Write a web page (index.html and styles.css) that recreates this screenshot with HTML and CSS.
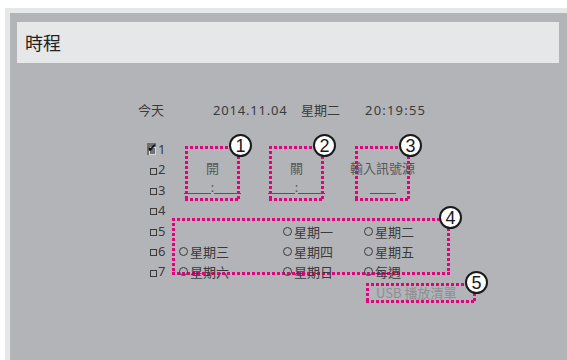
FILE: index.html
```html
<!DOCTYPE html>
<html lang="zh-Hant">

<head>
  <meta charset="UTF-8">
  <meta name="viewport" content="width=device-width, initial-scale=1.0">
  <title>時程</title>
  <link rel="stylesheet" href="styles.css">
</head>

<body>
  <div class="frame">
    <div class="panel">
      <div class="title-bar">時程</div>

      <div class="today">
        <span class="today-label">今天</span>
        <span class="date">2014.11.04</span>
        <span class="weekday">星期二</span>
        <span class="clock">20:19:55</span>
      </div>

      <div class="schedule">
        <ul class="slots">
          <li class="slot checked"><span class="check"><span class="tick">✔</span></span>1</li>
          <li class="slot"><span class="box"></span>2</li>
          <li class="slot"><span class="box"></span>3</li>
          <li class="slot"><span class="box"></span>4</li>
          <li class="slot"><span class="box"></span>5</li>
          <li class="slot"><span class="box"></span>6</li>
          <li class="slot"><span class="box"></span>7</li>
        </ul>

        <div class="fields">
          <div class="times">
            <div class="mark field">
              <span class="field-label">開</span>
              <span class="time"><span class="blank"></span>:<span class="blank"></span></span>
              <span class="badge">1</span>
            </div>
            <div class="mark field">
              <span class="field-label">關</span>
              <span class="time"><span class="blank"></span>:<span class="blank"></span></span>
              <span class="badge">2</span>
            </div>
            <div class="mark field">
              <span class="field-label">輸入訊號源</span>
              <span class="time"><span class="blank short"></span></span>
              <span class="badge">3</span>
            </div>
          </div>

          <div class="mark week">
            <span></span>
            <span class="radio">星期一</span>
            <span class="radio">星期二</span>
            <span class="radio">星期三</span>
            <span class="radio">星期四</span>
            <span class="radio">星期五</span>
            <span class="radio">星期六</span>
            <span class="radio">星期日</span>
            <span class="radio">每週</span>
            <span class="badge">4</span>
          </div>

          <div class="mark usb">
            USB 播放清單
            <span class="badge">5</span>
          </div>
        </div>
      </div>
    </div>
  </div>
</body>

</html>
```

FILE: styles.css
```css
body {
  margin: 0;
  padding: 0;
  background-color: #ffffff;
  font-family: 'Noto Sans', 'Noto Sans CJK TC', sans-serif;
  color: #3a3a3c;
  overflow: hidden;
}

.frame {
  margin: 8px 0 0 5px;
  padding: 5px 0 0 5px;
  height: 352px;
  box-sizing: border-box;
  background-color: #e6e7e8;
}

.panel {
  height: 347px;
  padding: 9px 8px 0 7px;
  box-sizing: border-box;
  background-color: #b3b4b7;
}

.title-bar {
  height: 41px;
  padding-left: 8px;
  background-color: #e6e7e9;
  color: #231f20;
  font-family: 'Noto Sans CJK TC', sans-serif;
  font-size: 18px;
  line-height: 41px;
}

.today {
  display: flex;
  margin-top: 37px;
  padding-left: 121px;
  font-size: 13px;
  line-height: 20px;
}

.today-label {
  width: 75px;
}

.date {
  width: 88px;
  letter-spacing: 0.8px;
}

.weekday {
  width: 64px;
}

.clock {
  letter-spacing: 1.2px;
}

.schedule {
  display: flex;
  margin-top: 19px;
  padding-left: 130px;
}

/* checkbox list on the left */
.slots {
  list-style: none;
  margin: 0;
  padding: 0;
  width: 25px;
  font-size: 13px;
}

.slot {
  height: 20.4px;
  line-height: 20.4px;
  display: flex;
  align-items: center;
}

.box {
  width: 5px;
  height: 5px;
  border: 1px solid #3a3a3c;
  margin: 3px 1px 0 3px;
}

.check {
  position: relative;
  width: 9px;
  height: 12px;
  margin-right: 2px;
  background-color: #707174;
}

.check::before {
  content: '';
  position: absolute;
  left: 2px;
  top: 4px;
  width: 5px;
  height: 6px;
  border: 1px solid #d8d9db;
}

.tick {
  position: absolute;
  left: 0;
  top: -5px;
  font-size: 12px;
  color: #111;
}

/* dotted magenta marks */
.mark {
  position: relative;
  box-sizing: border-box;
  padding: 3px;
  background:
    repeating-linear-gradient(90deg, #e5007e 0 3px, transparent 3px 5px) top left / 100% 3px no-repeat,
    repeating-linear-gradient(90deg, #e5007e 0 3px, transparent 3px 5px) bottom left / 100% 3px no-repeat,
    repeating-linear-gradient(180deg, #e5007e 0 3px, transparent 3px 5px) top left / 3px 100% no-repeat,
    repeating-linear-gradient(180deg, #e5007e 0 3px, transparent 3px 5px) top right / 3px 100% no-repeat;
}

.badge {
  position: absolute;
  top: -12px;
  right: -12px;
  width: 19px;
  height: 19px;
  border: 2px solid #1a1a1a;
  border-radius: 50%;
  background-color: #ffffff;
  color: #1a1a1a;
  font-family: 'Liberation Sans', Arial, sans-serif;
  font-size: 18px;
  line-height: 20px;
  text-align: center;
}

.fields {
  display: flex;
  flex-direction: column;
  align-items: flex-start;
}

.times {
  display: flex;
  gap: 29px;
  margin: 7px 0 0 13px;
}

.times .field + .field + .field {
  margin-left: 2px;
}

.field {
  width: 55px;
  height: 55px;
  display: flex;
  flex-direction: column;
  align-items: center;
  color: #555659;
  font-size: 13px;
}

.field-label {
  margin-top: 11px;
  line-height: 16px;
  white-space: nowrap;
  font-family: 'Noto Sans CJK TC', sans-serif;
}

.time {
  display: flex;
  align-items: flex-end;
  margin-top: 2px;
  height: 16px;
  line-height: 14px;
}

.blank {
  width: 27px;
  height: 14px;
  border-bottom: 1px solid #55565a;
}

.blank.short {
  width: 26px;
}

.week {
  display: grid;
  grid-template-columns: 104px 81px auto;
  grid-auto-rows: 20px;
  align-items: center;
  width: 278px;
  height: 57px;
  margin-top: 17px;
  padding-left: 7px;
  font-size: 13px;
  font-family: 'Noto Sans CJK TC', sans-serif;
}

.radio {
  display: flex;
  align-items: center;
  white-space: nowrap;
}

.radio::before {
  content: '';
  width: 7px;
  height: 7px;
  margin-right: 2px;
  border: 1.5px solid #3a3a3c;
  border-radius: 50%;
}

.usb {
  display: flex;
  align-items: center;
  width: 110px;
  height: 20px;
  margin: 8px 0 0 194px;
  padding: 3px 3px 3px 10px;
  color: #8d8e91;
  font-family: 'Noto Sans CJK TC', sans-serif;
  font-size: 13px;
  line-height: 14px;
  white-space: nowrap;
}
```
